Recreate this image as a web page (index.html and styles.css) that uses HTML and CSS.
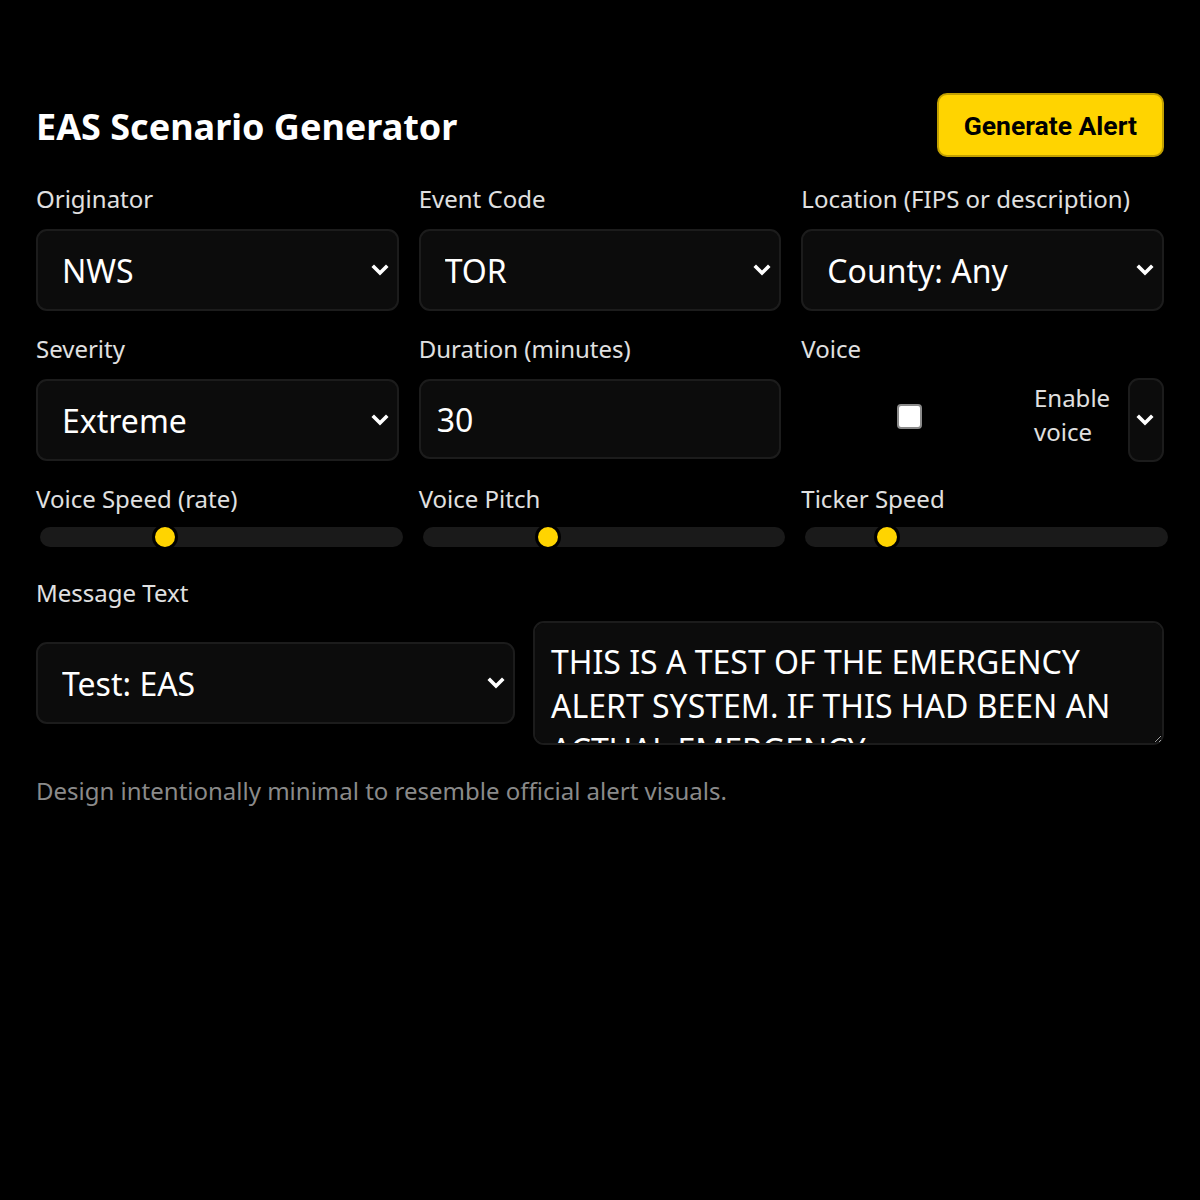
FILE: index.html
```html
<!DOCTYPE html>
<html lang="en">
<head>
<meta charset="utf-8">
<title>EAS Scenario Generator</title>
<link rel="stylesheet" href="styles.css">
</head>
<body>
<div class="app">
  <header class="top">
    <h1 class="title">EAS Scenario Generator</h1>
    <button class="gen" type="button">Generate Alert</button>
  </header>

  <div class="grid">
    <div class="field">
      <label class="lbl">Originator</label>
      <select class="sel"><option>NWS</option></select>
    </div>
    <div class="field">
      <label class="lbl">Event Code</label>
      <select class="sel"><option>TOR</option></select>
    </div>
    <div class="field">
      <label class="lbl">Location (FIPS or description)</label>
      <select class="sel"><option>County: Any</option></select>
    </div>

    <div class="field">
      <label class="lbl">Severity</label>
      <select class="sel"><option>Extreme</option></select>
    </div>
    <div class="field">
      <label class="lbl">Duration (minutes)</label>
      <input class="num" type="text" value="30">
    </div>
    <div class="field">
      <label class="lbl">Voice</label>
      <div class="voice">
        <span class="cbwrap"><input class="cb" type="checkbox"></span>
        <span class="vtext">Enable voice</span>
        <select class="sel mini"><option></option></select>
      </div>
    </div>

    <div class="field">
      <label class="lbl">Voice Speed (rate)</label>
      <input class="rng" type="range" min="0.5" max="2" step="0.1" value="1">
    </div>
    <div class="field">
      <label class="lbl">Voice Pitch</label>
      <input class="rng" type="range" min="0.5" max="2" step="0.1" value="1">
    </div>
    <div class="field">
      <label class="lbl">Ticker Speed</label>
      <input class="rng" type="range" min="0" max="1000" step="1" value="205">
    </div>
  </div>

  <div class="msg">
    <label class="lbl">Message Text</label>
    <div class="msgrow">
      <select class="sel"><option>Test: EAS</option></select>
      <textarea class="ta">THIS IS A TEST OF THE EMERGENCY ALERT SYSTEM. IF THIS HAD BEEN AN ACTUAL EMERGENCY,
YOU WOULD HAVE BEEN INSTRUCTED WHERE TO TUNE FOR OFFICIAL INFORMATION.</textarea>
    </div>
  </div>

  <p class="note">Design intentionally minimal to resemble official alert visuals.</p>
</div>
</body>
</html>
```

FILE: styles.css
```css
* { box-sizing: border-box; }

html, body {
  margin: 0;
  background: #000;
  color: #fff;
  font-family: "Noto Sans", "Open Sans", sans-serif;
}

.app {
  padding: 95px 36px 40px 36px;
}

.top {
  display: flex;
  align-items: center;
  justify-content: space-between;
  height: 64px;
}

.title {
  margin: 0;
  font-size: 36px;
  font-weight: 700;
  line-height: 1.2;
}

.gen {
  height: 64px;
  padding: 0 25px;
  background: #ffd400;
  color: #000;
  border: 2px solid #c2a000;
  border-radius: 10px;
  font-family: Roboto, "Noto Sans", sans-serif;
  font-weight: 700;
  font-size: 26.5px;
  margin-top: -4px;
}

.grid {
  margin-top: 24px;
  display: grid;
  grid-template-columns: repeat(3, 1fr);
  column-gap: 20px;
  row-gap: 22px;
}

.field {
  display: flex;
  flex-direction: column;
  min-width: 0;
}

.lbl {
  display: block;
  font-size: 24px;
  line-height: 32px;
  color: #e0e0e0;
  margin-bottom: 14px;
}

.sel {
  appearance: none;
  -webkit-appearance: none;
  height: 82px;
  width: 100%;
  padding: 0 40px 0 24px;
  background-color: #0c0c0c;
  background-image: url("data:image/svg+xml;utf8,<svg xmlns='http://www.w3.org/2000/svg' width='18' height='12' viewBox='0 0 18 12'><path d='M3 3 L9 9 L15 3' fill='none' stroke='white' stroke-width='3.6' stroke-linecap='square'/></svg>");
  background-repeat: no-repeat;
  background-position: right 8px center;
  border: 2px solid #1c1c1c;
  border-radius: 11px;
  color: #fff;
  font-family: "Noto Sans", sans-serif;
  font-size: 32px;
}

.num {
  height: 80px;
  width: 100%;
  padding: 0 16px;
  background: #0c0c0c;
  border: 2px solid #1c1c1c;
  border-radius: 11px;
  color: #fff;
  font-family: "Noto Sans", sans-serif;
  font-size: 32px;
  outline: none;
}

.voice {
  display: flex;
  align-items: center;
  gap: 16px;
  height: 84px;
  margin: -1px 0;
}

.cbwrap {
  flex: 1;
  display: flex;
  justify-content: center;
  align-items: center;
}

.cb {
  appearance: none;
  -webkit-appearance: none;
  margin: 0 0 8px 0;
  width: 25px;
  height: 25px;
  background: #fff;
  border: 2px solid #8a8a8a;
  border-radius: 4px;
}

.vtext {
  width: 78px;
  font-size: 24px;
  line-height: 34px;
  color: #e0e0e0;
  margin-bottom: 10px;
}

.sel.mini {
  flex: 0 0 36px;
  width: 36px;
  height: 84px;
  padding: 0;
}

.rng {
  -webkit-appearance: none;
  appearance: none;
  display: block;
  height: 26px;
  width: 100%;
  margin: -5px -4px 0 4px;
  background: transparent;
}

.rng::-webkit-slider-runnable-track {
  height: 20px;
  background: #1a1a1a;
  border-radius: 10px;
}

.rng::-webkit-slider-thumb {
  -webkit-appearance: none;
  appearance: none;
  width: 26px;
  height: 26px;
  margin-top: -3px;
  border-radius: 50%;
  background: #ffd400;
  border: 3px solid #000;
}

.msg {
  margin-top: 27px;
}

.msg .lbl {
  margin-bottom: 12px;
}

.msgrow {
  display: grid;
  grid-template-columns: 479px 1fr;
  column-gap: 18px;
  align-items: center;
}

.ta {
  height: 124px;
  width: 100%;
  padding: 17px 16px 14px 16px;
  background: #0c0c0c;
  border: 2px solid #1c1c1c;
  border-radius: 11px;
  color: #fff;
  font-family: "Noto Sans", sans-serif;
  font-size: 32px;
  line-height: 44px;
  resize: vertical;
  color-scheme: dark;
  scrollbar-width: none;
  outline: none;
}

.note {
  margin: 30px 0 0 0;
  font-size: 24px;
  line-height: 32px;
  color: #8a8a8a;
}
```
